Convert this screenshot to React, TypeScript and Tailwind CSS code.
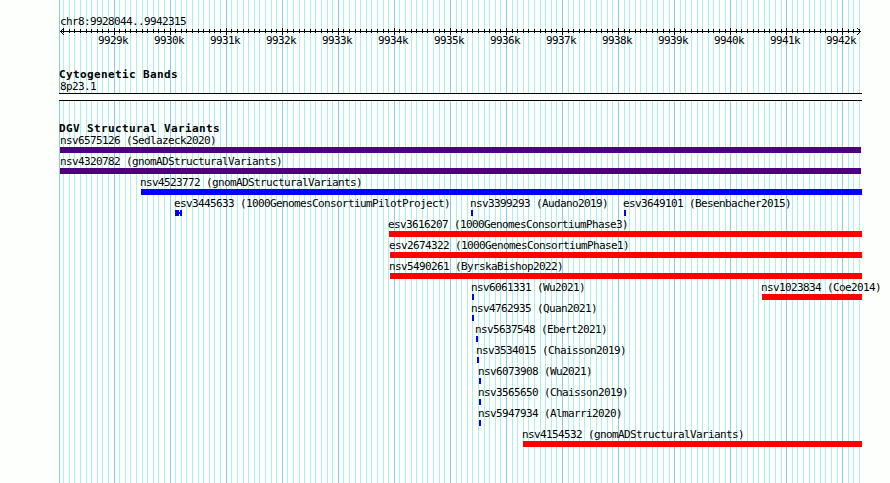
import React from 'react'

type Variant = {
  name: string
  x: number
  width: number
  color: string
}

const START = 9928044
const END = 9942315
const LEFT = 60
const SCALE = 800 / (END - START + 1)

const toX = (pos: number) => LEFT + Math.round((pos - START) * SCALE)

const ticks = Array.from({ length: 143 }, (_, i) => 9928100 + i * 100)
const majors = ticks.filter((pos) => pos % 1000 === 0)

// every row holds the variants that fit side by side
const rows: Variant[][] = [
  [{ name: 'nsv6575126 (Sedlazeck2020)', x: 60, width: 801, color: 'bg-[#4b0082]' }],
  [{ name: 'nsv4320782 (gnomADStructuralVariants)', x: 60, width: 801, color: 'bg-[#4b0082]' }],
  [{ name: 'nsv4523772 (gnomADStructuralVariants)', x: 141, width: 721, color: 'bg-[#0000ff]' }],
  [
    { name: 'esv3445633 (1000GenomesConsortiumPilotProject)', x: 175, width: 7, color: 'split' },
    { name: 'nsv3399293 (Audano2019)', x: 471, width: 2, color: 'bg-[#0000ff]' },
    { name: 'esv3649101 (Besenbacher2015)', x: 624, width: 2, color: 'bg-[#0000ff]' },
  ],
  [{ name: 'esv3616207 (1000GenomesConsortiumPhase3)', x: 389, width: 473, color: 'bg-[#ff0000]' }],
  [{ name: 'esv2674322 (1000GenomesConsortiumPhase1)', x: 390, width: 472, color: 'bg-[#ff0000]' }],
  [{ name: 'nsv5490261 (ByrskaBishop2022)', x: 390, width: 472, color: 'bg-[#ff0000]' }],
  [
    { name: 'nsv6061331 (Wu2021)', x: 472, width: 2, color: 'bg-[#0000ff]' },
    { name: 'nsv1023834 (Coe2014)', x: 762, width: 100, color: 'bg-[#ff0000]' },
  ],
  [{ name: 'nsv4762935 (Quan2021)', x: 472, width: 2, color: 'bg-[#0000ff]' }],
  [{ name: 'nsv5637548 (Ebert2021)', x: 476, width: 2, color: 'bg-[#0000ff]' }],
  [{ name: 'nsv3534015 (Chaisson2019)', x: 477, width: 2, color: 'bg-[#0000ff]' }],
  [{ name: 'nsv6073908 (Wu2021)', x: 479, width: 2, color: 'bg-[#0000ff]' }],
  [{ name: 'nsv3565650 (Chaisson2019)', x: 479, width: 2, color: 'bg-[#0000ff]' }],
  [{ name: 'nsv5947934 (Almarri2020)', x: 479, width: 2, color: 'bg-[#0000ff]' }],
  [{ name: 'nsv4154532 (gnomADStructuralVariants)', x: 523, width: 339, color: 'bg-[#ff0000]' }],
]

const GridLines = () => (
  <svg className="absolute inset-0" width="890" height="483" shapeRendering="crispEdges">
    <rect x={59} y={0} width={1} height={483} fill="#87ceeb" />
    {ticks.map((pos) => (
      <rect key={pos} x={toX(pos)} y={0} width={1} height={483} fill={pos % 1000 === 0 ? '#87ceeb' : '#afeeee'} />
    ))}
  </svg>
)

const Ruler = () => (
  <svg className="block" width="890" height="8" shapeRendering="crispEdges">
    <rect x={60} y={3} width={801} height={1} />
    {ticks.map((pos) => (
      <rect
        key={pos}
        x={toX(pos)}
        y={pos % 1000 === 0 ? 0 : 1}
        width={1}
        height={pos % 1000 === 0 ? 7 : 4}
      />
    ))}
    {/* arrow heads */}
    {[1, 2, 3].map((n) => (
      <g key={n}>
        <rect x={60 + n} y={3 - n} width={1} height={1} />
        <rect x={60 + n} y={3 + n} width={1} height={1} />
        <rect x={860 - n} y={3 - n} width={1} height={1} />
        <rect x={860 - n} y={3 + n} width={1} height={1} />
      </g>
    ))}
  </svg>
)

const VariantGlyph = ({ variant, offset }: { variant: Variant; offset: number }) => (
  <div className="w-0 shrink-0" style={{ marginLeft: offset }}>
    <div className={`h-[13px] whitespace-pre ${variant.x > LEFT ? '-ml-px' : ''}`}>{variant.name}</div>
    {variant.color === 'split' ? (
      <div className="flex h-[6px] w-[7px] items-center">
        <div className="h-full w-[4px] bg-[#0000ff]" />
        <div className="h-[2px] w-px bg-[#0000ff]" />
        <div className="h-full w-[2px] bg-[#0000ff]" />
      </div>
    ) : (
      <div className={`h-[6px] ${variant.color}`} style={{ width: variant.width }} />
    )}
  </div>
)

const App = () => {
  return (
    <div className="relative h-[483px] w-[890px] overflow-hidden bg-[#fdfffd] font-['DejaVu_Sans_Mono',monospace] text-[11px] leading-[13px] tracking-[-0.622px] text-black">
      <GridLines />

      <div className="relative flex flex-col pt-[15px]">
        {/* scale */}
        <div className="h-[13px] pl-[60px]">chr8:9928044..9942315</div>
        <Ruler />
        <div className="-mt-[2px] flex h-[13px] pl-[85px]">
          {majors.map((pos) => (
            <div key={pos} className="w-[56px] shrink-0 text-center">{pos / 1000}k</div>
          ))}
        </div>

        {/* cytogenetic bands */}
        <h2 className="mt-[21px] h-[12px] pl-[59px] font-bold tracking-[0.378px]">Cytogenetic Bands</h2>
        <div className="h-[13px] pl-[60px]">8p23.1</div>
        <div className="ml-[59px] h-[8px] w-[803px] border-y border-black bg-[#fdfffd]" />

        {/* structural variants */}
        <h2 className="mt-[21px] h-[12px] pl-[59px] font-bold tracking-[0.378px]">DGV Structural Variants</h2>
        {rows.map((row, i) => (
          <div key={i} className="flex h-[21px]">
            {row.map((variant, j) => (
              <VariantGlyph key={variant.name} variant={variant} offset={variant.x - (j > 0 ? row[j - 1].x : 0)} />
            ))}
          </div>
        ))}
      </div>
    </div>
  )
}

export default App
